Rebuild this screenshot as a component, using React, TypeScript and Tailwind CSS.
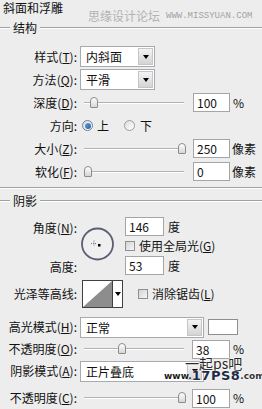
import React from 'react';

function Lbl({ name, k }: { name: string; k?: string }) {
  return (
    <span>
      {name}
      {k && (
        <>
          (<span className="underline">{k}</span>)
        </>
      )}
      :
    </span>
  );
}

function GroupTitle({ t }: { t: string }) {
  return (
    <div className="flex items-center h-[14px]">
      <div className="w-[10px] h-[2px] border-t border-[#a0a0a0] bg-white" />
      <span className="px-[3px] leading-[14px]">{t}</span>
      <div className="flex-1 h-[2px] border-t border-[#a0a0a0] bg-white" />
    </div>
  );
}

function Select({ v, w }: { v: string; w: string }) {
  return (
    <div className={`${w} h-[21px] flex bg-white border border-[#a7abb0]`}>
      <span className="flex-1 pl-[5px] leading-[19px]">{v}</span>
      <div className="w-[15px] m-[1px] flex items-center justify-center border border-[#c6c6c6] bg-gradient-to-b from-[#f4f4f4] to-[#d4d4d4]">
        <div className="w-0 h-0 border-l-[3.5px] border-r-[3.5px] border-t-[4px] border-l-transparent border-r-transparent border-t-black" />
      </div>
    </div>
  );
}

function Input({ v, w = 'w-[37px]' }: { v: string; w?: string }) {
  return (
    <div className={`${w} h-[19px] bg-white border border-[#a5a5a5] pl-[3px] leading-[17px]`}>{v}</div>
  );
}

function Slider({ pos }: { pos: number }) {
  return (
    <div className="relative w-[100px] h-[14px] ml-[4px]">
      <div className="mt-[6px] h-[2px] border-t border-[#b2b2b2] bg-white" />
      <div
        className="absolute top-[1px] w-[8px] h-[11px] rounded-t-[4px] rounded-b-[1px] border border-[#8c8c8c] bg-gradient-to-b from-white to-[#d6d6d6]"
        style={{ left: pos }}
      />
    </div>
  );
}

function Radio({ on }: { on?: boolean }) {
  return (
    <span
      className={`w-[11px] h-[11px] rounded-full border flex items-center justify-center bg-gradient-to-br from-[#dedede] to-white ${
        on ? 'border-[#6c7f96]' : 'border-[#9c9c9c]'
      }`}
    >
      {on && <span className="w-[6px] h-[6px] rounded-full bg-gradient-to-br from-[#6aa6e0] to-[#1f5c9e]" />}
    </span>
  );
}

function Checkbox() {
  return <span className="block w-[10px] h-[10px] border border-[#909090] bg-gradient-to-br from-[#d4d4d4] to-[#f6f6f6]" />;
}

export default function App() {
  return (
    <div className="relative w-[262px] h-[409px] overflow-hidden bg-[#ededed] text-[12px] text-[#111] font-['Noto_Sans_CJK_SC',sans-serif]">
      {/* header */}
      <div className="flex h-[21px]">
        <div className="w-[81px] pl-[3px] pt-[1px] leading-[14px]">斜面和浮雕</div>
        <div className="flex-1 flex flex-col">
          <div className="mt-[8px] h-px bg-[#a3a3a3]" />
          <div className="flex items-center ml-[7px] mt-[1px] gap-[6px]">
            <span className="leading-[14px] text-[#b3b3b3]">思缘设计论坛</span>
            <span className="text-[9px] leading-[14px] text-[#a3a3a3] font-['Liberation_Mono',monospace]">WWW.MISSYUAN.COM</span>
          </div>
        </div>
      </div>

      {/* 结构 */}
      <GroupTitle t="结构" />
      <div className="mt-[10px] flex flex-col">
        <div className="flex items-center h-[23px]">
          <div className="w-[80px] text-right pr-[3px]"><Lbl name="样式" k="T" /></div>
          <Select v="内斜面" w="w-[75px]" />
        </div>
        <div className="flex items-center h-[23px]">
          <div className="w-[80px] text-right pr-[3px]"><Lbl name="方法" k="Q" /></div>
          <Select v="平滑" w="w-[75px]" />
        </div>
        <div className="flex items-center h-[23px]">
          <div className="w-[80px] text-right pr-[3px]"><Lbl name="深度" k="D" /></div>
          <Slider pos={6} />
          <div className="ml-[9px]"><Input v="100" /></div>
          <span className="ml-[3px]">%</span>
        </div>
        <div className="flex items-center h-[23px]">
          <div className="w-[80px] text-right pr-[3px]"><Lbl name="方向" /></div>
          <span className="ml-[2px]"><Radio on /></span>
          <span className="ml-[4px]">上</span>
          <span className="ml-[15px]"><Radio /></span>
          <span className="ml-[5px]">下</span>
        </div>
        <div className="flex items-center h-[23px]">
          <div className="w-[80px] text-right pr-[3px]"><Lbl name="大小" k="Z" /></div>
          <Slider pos={94} />
          <div className="ml-[9px]"><Input v="250" /></div>
          <span className="ml-[2px]">像素</span>
        </div>
        <div className="flex items-center h-[23px]">
          <div className="w-[80px] text-right pr-[3px]"><Lbl name="软化" k="F" /></div>
          <Slider pos={0} />
          <div className="ml-[9px]"><Input v="0" /></div>
          <span className="ml-[2px]">像素</span>
        </div>
      </div>
      <div className="mt-[4px] h-[2px] border-t border-[#a0a0a0] bg-white" />

      {/* 阴影 */}
      <div className="mt-[5px]">
        <GroupTitle t="阴影" />
      </div>
      <div className="flex mt-[9px] h-[58px]">
        <div className="w-[80px] flex flex-col justify-between text-right pr-[3px]">
          <div className="h-[19px] leading-[21px]"><Lbl name="角度" k="N" /></div>
          <div className="h-[19px] leading-[21px]"><Lbl name="高度" /></div>
        </div>
        <svg width="33" height="34" viewBox="0 0 33 34" className="mt-[10px] ml-[1px]">
          <circle cx="16.5" cy="17" r="15.5" fill="#efefef" stroke="#5b5e72" strokeWidth="1.8" />
          <path d="M13 13.5v6M10 16.5h6" stroke="#777" strokeWidth="1" strokeDasharray="1 1" />
          <rect x="17" y="17" width="2.5" height="2.5" fill="#000" />
        </svg>
        <div className="ml-[11px] flex flex-col">
          <div className="flex items-center h-[19px]">
            <Input v="146" w="w-[39px]" />
            <span className="ml-[4px]">度</span>
          </div>
          <div className="flex items-center h-[20px]">
            <Checkbox />
            <span className="ml-[4px]">使用全局光(<span className="underline">G</span>)</span>
          </div>
          <div className="flex items-center h-[19px]">
            <Input v="53" w="w-[39px]" />
            <span className="ml-[4px]">度</span>
          </div>
        </div>
      </div>

      <div className="flex items-center h-[28px] mt-[5px]">
        <div className="w-[80px] text-right pr-[3px]"><Lbl name="光泽等高线" /></div>
        <div className="ml-[2px] w-[41px] h-[28px] flex border border-[#404040] bg-white">
          <svg width="29" height="26" viewBox="0 0 29 26">
            <polygon points="0,26 29,0 29,26" fill="#8d8d8d" />
          </svg>
          <div className="flex-1 border-l border-[#404040] flex items-center justify-center">
            <div className="w-0 h-0 border-l-[3px] border-r-[3px] border-t-[4px] border-l-transparent border-r-transparent border-t-black" />
          </div>
        </div>
        <span className="ml-[15px]"><Checkbox /></span>
        <span className="ml-[4px]">消除锯齿(<span className="underline">L</span>)</span>
      </div>

      <div className="flex items-center h-[20px] mt-[9px]">
        <div className="w-[80px] text-right pr-[3px]"><Lbl name="高光模式" k="H" /></div>
        <Select v="正常" w="w-[124px]" />
        <div className="ml-[4px] w-[30px] h-[16px] bg-white border border-[#8e8e8e]" />
      </div>
      <div className="flex items-center h-[20px] mt-[2px]">
        <div className="w-[80px] text-right pr-[3px]"><Lbl name="不透明度" k="O" /></div>
        <Slider pos={34} />
        <div className="ml-[8px]"><Input v="38" w="w-[38px]" /></div>
        <span className="ml-[3px]">%</span>
      </div>
      <div className="flex items-center h-[20px] mt-[2px]">
        <div className="w-[80px] text-right pr-[3px]"><Lbl name="阴影模式" k="A" /></div>
        <Select v="正片叠底" w="w-[124px]" />
      </div>
      <div className="flex items-center h-[20px] mt-[7px]">
        <div className="w-[80px] text-right pr-[3px]"><Lbl name="不透明度" k="C" /></div>
        <Slider pos={94} />
        <div className="ml-[8px]"><Input v="100" w="w-[38px]" /></div>
        <span className="ml-[3px]">%</span>
      </div>

      {/* watermark overlay */}
      <span className="absolute left-[185px] top-[355px] text-[14px] leading-[16px] text-[#2a2a2a] pointer-events-none [text-shadow:0_0_2px_#fff,0_0_2px_#fff]">一起ps吧</span>
      <div className="absolute left-[164px] top-[370px] flex items-end leading-[12px] pointer-events-none font-['DejaVu_Sans',sans-serif] [text-shadow:0_0_1px_#fff,0_0_2px_#fff]">
        <span className="text-[9px] font-bold text-[#1a1a1a]">www.</span>
        <span className="text-[13px] font-black tracking-[0.5px] text-[#1d2b46]">17PS8</span>
        <span className="text-[9px] font-bold text-[#333]">.com</span>
      </div>
    </div>
  );
}
